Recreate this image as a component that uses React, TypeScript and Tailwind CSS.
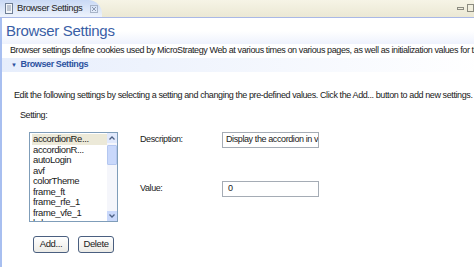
import React from 'react';

const items = ['accordionRe...', 'accordionR...', 'autoLogin', 'avf', 'colorTheme', 'frame_ft', 'frame_rfe_1', 'frame_vfe_1', 'hdr'];

export default function App() {
  return (
    <div className="w-[474px] h-[267px] overflow-hidden bg-white text-[9px] tracking-[-0.4px] text-[#1a1a1a] flex flex-col" style={{ fontFamily: 'Tahoma, "Liberation Sans", Arial, sans-serif' }}>
      {/* tab bar */}
      <div className="h-[18px] shrink-0 bg-gradient-to-b from-[#f6f4e6] to-[#ebe8d4] flex items-end border-b border-[#a9b8e6]">
        <div className="relative h-[17px] w-[102px] rounded-tr-[14px] bg-gradient-to-b from-[#c9d9f5] to-[#eef3fc] flex items-center pl-[4px] whitespace-nowrap">
          <svg width="10" height="11" viewBox="0 0 10 11" className="mr-[3px] shrink-0">
            <rect x="1.5" y="0.5" width="7" height="10" fill="#f4f6f9" stroke="#6f7f96" />
            <line x1="3" y1="3" x2="7" y2="3" stroke="#8a98ad" />
            <line x1="3" y1="5" x2="7" y2="5" stroke="#8a98ad" />
            <line x1="3" y1="7" x2="7" y2="7" stroke="#8a98ad" />
          </svg>
          <span className="text-[9.5px] text-[#222]">Browser Settings</span>
          <svg width="8" height="8" viewBox="0 0 8 8" className="ml-[8px] shrink-0">
            <rect x="0.5" y="0.5" width="7" height="7" fill="none" stroke="#a8b4c8" />
            <path d="M2 2 L6 6 M6 2 L2 6" stroke="#8d9ab0" />
          </svg>
        </div>
        <div className="flex-1" />
        <div className="h-[18px] flex items-center gap-[3px]">
          <div className="w-[7px] h-[3px] border border-[#8b8b80]" />
          <div className="w-[7px] h-[8px] border border-[#8b8b80]" />
        </div>
      </div>

      <div className="flex-1 flex border-l-[2px] border-[#a8bff0]">
        <div className="flex-1 flex flex-col">
          {/* header */}
          <div className="h-[26px] shrink-0 bg-gradient-to-b from-white via-white to-[#eef2fd] pl-[4px] pt-[3px]">
            <div className="text-[15px] tracking-[-0.3px] text-[#3a5ea6] leading-[20px]">Browser Settings</div>
          </div>
          <div className="h-[12px] pl-[8px] whitespace-nowrap leading-[12px]">
            Browser settings define cookies used by MicroStrategy Web at various times on various pages, as well as initialization values for the
          </div>
          <div className="mt-[2px] h-[14px] bg-gradient-to-r from-[#e7eefc] to-white flex items-center pl-[9px]">
            <span className="text-[6px] text-[#2d52a0] mr-[4px]">▼</span>
            <span className="font-bold text-[#2d52a0]">Browser Settings</span>
          </div>

          <div className="pl-[12px] pt-[17px] whitespace-nowrap leading-[12px]">
            Edit the following settings by selecting a setting and changing the pre-defined values. Click the Add... button to add new settings.
          </div>
          <div className="pl-[18px] pt-[8px] leading-[12px]">Setting:</div>

          <div className="flex pl-[27px] pt-[11px]">
            {/* list */}
            <div className="w-[89px] h-[90px] border border-[#7f9db9] flex overflow-hidden">
              <div className="flex-1 pt-[1px] pl-[3px] flex flex-col leading-[10.5px] text-[9.5px]">
                {items.map((it, i) => (
                  <div key={it} className={i === 0 ? 'bg-[#ece9d8] -ml-[1px] pl-[1px]' : ''}>{it}</div>
                ))}
              </div>
              <div className="w-[10px] flex flex-col bg-[#f5f6fb]">
                <div className="h-[10px] flex items-center justify-center bg-[#e1e9fc]">
                  <svg width="6" height="4" viewBox="0 0 6 4"><path d="M0.5 3.5 L3 1 L5.5 3.5" stroke="#4d6185" strokeWidth="1.3" fill="none" /></svg>
                </div>
                <div className="mt-[2px] h-[20px] bg-[#c9d8fb] border border-[#b4c7f0] rounded-[1px]" />
                <div className="flex-1" />
                <div className="h-[10px] flex items-center justify-center bg-[#c9d8fb]">
                  <svg width="6" height="4" viewBox="0 0 6 4"><path d="M0.5 0.5 L3 3 L5.5 0.5" stroke="#4d6185" strokeWidth="1.3" fill="none" /></svg>
                </div>
              </div>
            </div>

            {/* fields */}
            <div className="flex flex-col ml-[22px]">
              <div className="flex items-center h-[16px]">
                <span className="w-[82px]">Description:</span>
                <div className="w-[97px] h-[16px] border border-[#a5acb5] pl-[3px] flex items-center overflow-hidden whitespace-nowrap">Display the accordion in v</div>
              </div>
              <div className="flex items-center h-[16px] mt-[33px]">
                <span className="w-[82px]">Value:</span>
                <div className="w-[97px] h-[16px] border border-[#a5acb5] pl-[5px] flex items-center">0</div>
              </div>
            </div>
          </div>

          <div className="flex gap-[9px] pl-[31px] pt-[14px]">
            <button className="w-[36px] h-[17px] border border-[#4a5f80] rounded-[3px] bg-gradient-to-b from-white to-[#ecebe6] text-[9.5px]">Add...</button>
            <button className="w-[36px] h-[17px] border border-[#4a5f80] rounded-[3px] bg-gradient-to-b from-white to-[#ecebe6] text-[9.5px]">Delete</button>
          </div>
        </div>
      </div>
    </div>
  );
}
